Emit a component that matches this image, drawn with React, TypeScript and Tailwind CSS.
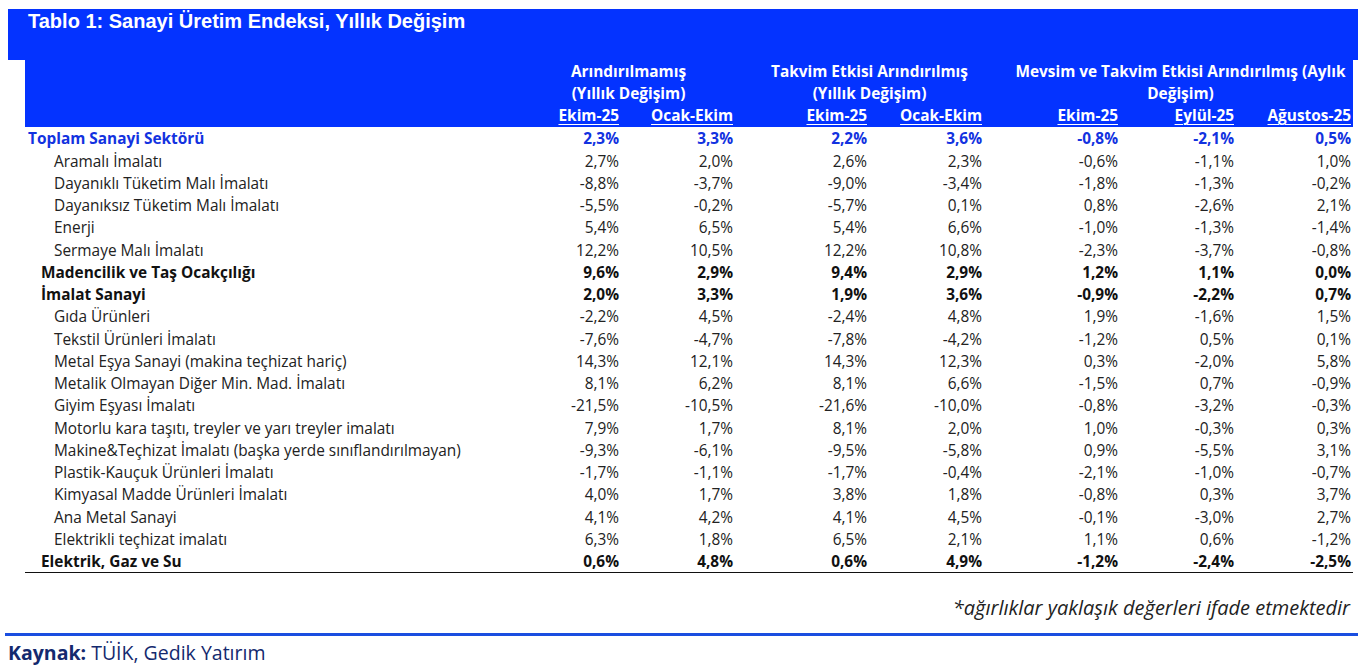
const rows: { label: string; kind: "total" | "main" | "sub"; v: string[] }[] = [
  { label: "Toplam Sanayi Sektörü", kind: "total", v: ["2,3%", "3,3%", "2,2%", "3,6%", "-0,8%", "-2,1%", "0,5%"] },
  { label: "Aramalı İmalatı", kind: "sub", v: ["2,7%", "2,0%", "2,6%", "2,3%", "-0,6%", "-1,1%", "1,0%"] },
  { label: "Dayanıklı Tüketim Malı İmalatı", kind: "sub", v: ["-8,8%", "-3,7%", "-9,0%", "-3,4%", "-1,8%", "-1,3%", "-0,2%"] },
  { label: "Dayanıksız Tüketim Malı İmalatı", kind: "sub", v: ["-5,5%", "-0,2%", "-5,7%", "0,1%", "0,8%", "-2,6%", "2,1%"] },
  { label: "Enerji", kind: "sub", v: ["5,4%", "6,5%", "5,4%", "6,6%", "-1,0%", "-1,3%", "-1,4%"] },
  { label: "Sermaye Malı İmalatı", kind: "sub", v: ["12,2%", "10,5%", "12,2%", "10,8%", "-2,3%", "-3,7%", "-0,8%"] },
  { label: "Madencilik ve Taş Ocakçılığı", kind: "main", v: ["9,6%", "2,9%", "9,4%", "2,9%", "1,2%", "1,1%", "0,0%"] },
  { label: "İmalat Sanayi", kind: "main", v: ["2,0%", "3,3%", "1,9%", "3,6%", "-0,9%", "-2,2%", "0,7%"] },
  { label: "Gıda Ürünleri", kind: "sub", v: ["-2,2%", "4,5%", "-2,4%", "4,8%", "1,9%", "-1,6%", "1,5%"] },
  { label: "Tekstil Ürünleri İmalatı", kind: "sub", v: ["-7,6%", "-4,7%", "-7,8%", "-4,2%", "-1,2%", "0,5%", "0,1%"] },
  { label: "Metal Eşya Sanayi (makina teçhizat hariç)", kind: "sub", v: ["14,3%", "12,1%", "14,3%", "12,3%", "0,3%", "-2,0%", "5,8%"] },
  { label: "Metalik Olmayan Diğer Min. Mad. İmalatı", kind: "sub", v: ["8,1%", "6,2%", "8,1%", "6,6%", "-1,5%", "0,7%", "-0,9%"] },
  { label: "Giyim Eşyası İmalatı", kind: "sub", v: ["-21,5%", "-10,5%", "-21,6%", "-10,0%", "-0,8%", "-3,2%", "-0,3%"] },
  { label: "Motorlu kara taşıtı, treyler ve yarı treyler imalatı", kind: "sub", v: ["7,9%", "1,7%", "8,1%", "2,0%", "1,0%", "-0,3%", "0,3%"] },
  { label: "Makine&Teçhizat İmalatı (başka yerde sınıflandırılmayan)", kind: "sub", v: ["-9,3%", "-6,1%", "-9,5%", "-5,8%", "0,9%", "-5,5%", "3,1%"] },
  { label: "Plastik-Kauçuk Ürünleri İmalatı", kind: "sub", v: ["-1,7%", "-1,1%", "-1,7%", "-0,4%", "-2,1%", "-1,0%", "-0,7%"] },
  { label: "Kimyasal Madde Ürünleri İmalatı", kind: "sub", v: ["4,0%", "1,7%", "3,8%", "1,8%", "-0,8%", "0,3%", "3,7%"] },
  { label: "Ana Metal Sanayi", kind: "sub", v: ["4,1%", "4,2%", "4,1%", "4,5%", "-0,1%", "-3,0%", "2,7%"] },
  { label: "Elektrikli teçhizat imalatı", kind: "sub", v: ["6,3%", "1,8%", "6,5%", "2,1%", "1,1%", "0,6%", "-1,2%"] },
  { label: "Elektrik, Gaz ve Su", kind: "main", v: ["0,6%", "4,8%", "0,6%", "4,9%", "-1,2%", "-2,4%", "-2,5%"] },
];

const grid =
  "grid grid-cols-[497px_99px_114px_20px_114px_115px_24px_112px_116px_117px]";

function Row({ r }: { r: (typeof rows)[number] }) {
  const tone =
    r.kind === "total"
      ? "font-bold text-[#1232e0]"
      : r.kind === "main"
        ? "font-bold text-[#111]"
        : "text-[#222]";
  const indent = r.kind === "total" ? "pl-[3px]" : r.kind === "main" ? "pl-[16px]" : "pl-[29px]";
  const [a, b, c, d, e, f, g] = r.v;
  const cell = "text-right pr-[2px]";
  return (
    <div className={`${grid} h-[22.26px] pt-[2px] items-center text-[15.4px] leading-none ${tone}`}>
      <div className={`${indent} whitespace-nowrap`}>{r.label}</div>
      <div className={cell}>{a}</div>
      <div className={cell}>{b}</div>
      <div />
      <div className={cell}>{c}</div>
      <div className={cell}>{d}</div>
      <div />
      <div className={cell}>{e}</div>
      <div className={cell}>{f}</div>
      <div className={cell}>{g}</div>
    </div>
  );
}

export default function App() {
  const sub = "text-right pr-[2px] underline underline-offset-[3px] decoration-1";
  return (
    <div className="w-[1367px] h-[672px] bg-white overflow-hidden font-['Open_Sans',sans-serif]">
      <div className="pt-[9px] pl-[8px]">
        <div className="w-[1350px] h-[51px] bg-[#0433ff] pl-[20px] pt-[2px]">
          <h1 className="font-['Liberation_Sans',Arial,sans-serif] font-bold text-white text-[20px] leading-none">
            Tablo 1: Sanayi Üretim Endeksi, Yıllık Değişim
          </h1>
        </div>
      </div>

      <div className="ml-[25px] w-[1328px]">
        <div className="bg-[#0433ff] h-[67px] text-white font-bold text-[15.4px] leading-[22px] pt-[1px]">
          <div className={grid}>
            <div />
            <div className="col-span-2 text-center">
              Arındırılmamış
              <br />
              (Yıllık Değişim)
            </div>
            <div />
            <div className="col-span-2 text-center">
              Takvim Etkisi Arındırılmış
              <br />
              (Yıllık Değişim)
            </div>
            <div />
            <div className="col-span-3 text-center">
              Mevsim ve Takvim Etkisi Arındırılmış (Aylık
              <br />
              Değişim)
            </div>
          </div>
          <div className={grid}>
            <div />
            <div className={sub}>Ekim-25</div>
            <div className={sub}>Ocak-Ekim</div>
            <div />
            <div className={sub}>Ekim-25</div>
            <div className={sub}>Ocak-Ekim</div>
            <div />
            <div className={sub}>Ekim-25</div>
            <div className={sub}>Eylül-25</div>
            <div className={sub}>Ağustos-25</div>
          </div>
        </div>
        <div className="border-b border-[#111]">
          {rows.map((r) => (
            <Row key={r.label} r={r} />
          ))}
        </div>
      </div>

      <div className="w-[1350px] text-right pt-[25px] italic text-[20px] text-[#222] leading-none">
        *ağırlıklar yaklaşık değerleri ifade etmektedir
      </div>

      <div className="ml-[5px] w-[1353px] h-[3px] bg-[#1a4ee0] mt-[15px]" />
      <div className="pl-[8px] pt-[4px] text-[19.5px] text-[#14296e] leading-[26px]">
        <span className="font-bold">Kaynak:</span> TÜİK, Gedik Yatırım
      </div>
    </div>
  );
}
